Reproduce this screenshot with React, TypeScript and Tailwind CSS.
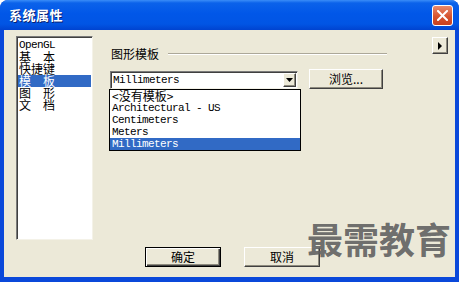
import React from 'react';

const mono = "font-['Liberation_Mono','Noto_Sans_CJK_SC',monospace] text-[11px] tracking-[-0.6px] leading-[12px]";
const cjk = "font-['Noto_Sans_CJK_SC',sans-serif] text-[12px] leading-[12px]";
const raised =
  'bg-[#ECE9D8] border border-t-white border-l-white border-r-[#404040] border-b-[#404040] shadow-[inset_-1px_-1px_0_#8E8B7E]';

const categories = [
  { label: 'OpenGL', latin: true },
  { label: '基\u3000本' },
  { label: '快捷键' },
  { label: '模\u3000板', selected: true },
  { label: '图\u3000形' },
  { label: '文\u3000档' },
];

const templates = [
  { label: '<没有模板>', mixed: true },
  { label: 'Architectural - US' },
  { label: 'Centimeters' },
  { label: 'Meters' },
  { label: 'Millimeters', selected: true },
];

export default function App() {
  return (
    <div className="w-[459px] h-[282px] flex flex-col bg-[#0A48DA] rounded-t-[8px] overflow-hidden select-none">
      {/* title bar */}
      <div className="h-[30px] flex items-center pl-[9px] pr-[6px] bg-[linear-gradient(to_bottom,#3A8DF8_0%,#0B62EA_10%,#0157E8_45%,#0155E4_80%,#0043D0_100%)]">
        <span className="font-['Noto_Sans_CJK_SC',sans-serif] font-bold text-[13px] text-white tracking-[0.5px] [text-shadow:1px_1px_0_#0A1E6E]">
          系统属性
        </span>
        <button className="ml-auto w-[21px] h-[21px] rounded-[3px] border border-white bg-[linear-gradient(to_bottom,#E98A6C,#D6542F_55%,#C8401F)] flex items-center justify-center">
          <svg width="11" height="11" viewBox="0 0 11 11">
            <path d="M1 1 L10 10 M10 1 L1 10" stroke="white" strokeWidth="2" strokeLinecap="square" />
          </svg>
        </button>
      </div>

      {/* body */}
      <div className="relative flex-1 mx-[4px] mb-[5px] bg-[#ECE9D8] flex flex-col">
        <div className="flex pt-[6px] pl-[12px] pr-[7px]">
          {/* category list */}
          <div className="w-[77px] h-[204px] bg-white border border-t-[#7A7A7A] border-l-[#7A7A7A] border-r-[#F4F2E8] border-b-[#F4F2E8] shadow-[inset_1px_1px_0_#404040] pt-[2px] pl-[1px] pr-[1px]">
            {categories.map((c) => (
              <div
                key={c.label}
                className={`h-[12px] pl-[1px] ${c.latin ? mono : cjk} ${c.selected ? 'bg-[#316AC5] text-white' : 'text-black'}`}
              >
                {c.label}
              </div>
            ))}
          </div>

          {/* right pane */}
          <div className="flex-1 ml-[16px] flex flex-col">
            <div className="flex items-start">
              <div className="flex-1 mt-[12px] flex items-center h-[12px]">
                <span className={`${cjk} ml-[2px] text-black`}>图形模板</span>
                <div className="flex-1 ml-[9px] h-[2px] border-t border-t-[#ACA899] border-b border-b-white" />
              </div>
              <button className={`${raised} ml-[45px] mt-[1px] w-[16px] h-[17px] flex items-center justify-center`}>
                <svg width="5" height="8" viewBox="0 0 5 8">
                  <path d="M0 0 L4 4 L0 8 Z" fill="black" />
                </svg>
              </button>
            </div>

            <div className="flex items-start mt-[11px]">
              <div className="relative ml-[1px] w-[188px] h-[18px] bg-white border border-t-[#7A7A7A] border-l-[#7A7A7A] border-r-[#F4F2E8] border-b-[#F4F2E8] shadow-[inset_1px_1px_0_#404040] flex items-center pl-[2px] pr-[1px]">
                <span className={`${mono} text-black`}>Millimeters</span>
                <div className={`${raised} ml-auto w-[13px] h-[14px] flex items-center justify-center`}>
                  <svg width="7" height="4" viewBox="0 0 7 4">
                    <path d="M0 0 H7 L3.5 4 Z" fill="black" />
                  </svg>
                </div>

                {/* open dropdown */}
                <div className="absolute left-[-2px] top-[17px] w-[192px] bg-white border border-black z-10">
                  {templates.map((t) => (
                    <div
                      key={t.label}
                      className={`h-[12px] pl-[2px] ${t.mixed ? cjk : mono} ${t.selected ? 'bg-[#316AC5] text-white' : 'text-black'}`}
                    >
                      {t.label}
                    </div>
                  ))}
                </div>
              </div>
              <button className={`${raised} ml-[11px] mt-[-2px] w-[74px] h-[20px] flex items-center justify-center`}>
                <span className={`${cjk} text-black`}>浏览...</span>
              </button>
            </div>
          </div>
        </div>

        {/* bottom buttons */}
        <div className="flex mt-[7px] pl-[141px]">
          <button className="w-[76px] h-[20px] bg-[#ECE9D8] border border-black shadow-[inset_1px_1px_0_#fff,inset_-1px_-1px_0_#404040,inset_-2px_-2px_0_#8E8B7E] flex items-center justify-center">
            <span className={`${cjk} text-black`}>确定</span>
          </button>
          <button className={`${raised} ml-[23px] w-[76px] h-[20px] flex items-center justify-center`}>
            <span className={`${cjk} text-black`}>取消</span>
          </button>
        </div>

        {/* watermark */}
        <div className="absolute left-[303px] top-[190px] font-['Noto_Sans_CJK_SC',sans-serif] font-bold text-[36px] leading-none text-[#5E5E5E]/90 pointer-events-none">
          最需教育
        </div>
      </div>
    </div>
  );
}
